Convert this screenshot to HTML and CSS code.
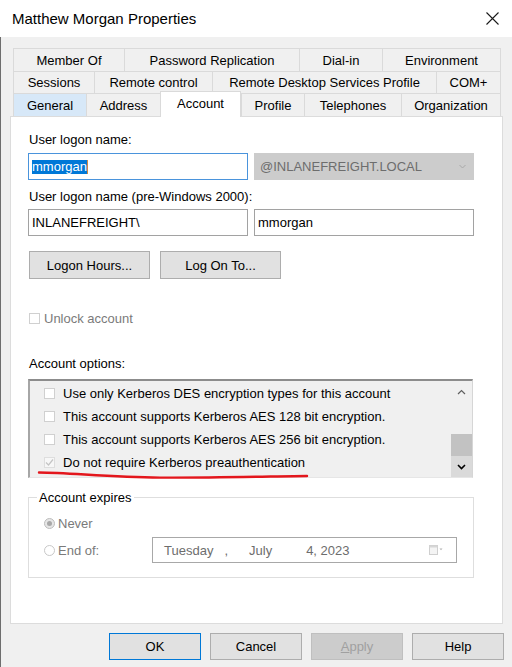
FILE: index.html
```html
<!DOCTYPE html>
<html>
<head>
<meta charset="utf-8">
<link rel="stylesheet" href="styles.css">
</head>
<body>
<div class="window">
  <div class="titlebar">
    <span class="title">Matthew Morgan Properties</span>
    <svg class="close" width="13" height="13" viewBox="0 0 13 13"><path d="M0.5 0.5 L12.5 12.5 M12.5 0.5 L0.5 12.5" stroke="#1a1a1a" stroke-width="1.1" fill="none"/></svg>
  </div>
  <div class="client">
    <div class="tabs">
      <div class="tabrow r1">
        <div class="tab">Member Of</div>
        <div class="tab">Password Replication</div>
        <div class="tab">Dial-in</div>
        <div class="tab">Environment</div>
      </div>
      <div class="tabrow r2">
        <div class="tab">Sessions</div>
        <div class="tab">Remote control</div>
        <div class="tab">Remote Desktop Services Profile</div>
        <div class="tab">COM+</div>
      </div>
      <div class="tabrow r3">
        <div class="tab hover">General</div>
        <div class="tab">Address</div>
        <div class="tab active">Account</div>
        <div class="tab">Profile</div>
        <div class="tab">Telephones</div>
        <div class="tab">Organization</div>
      </div>
    </div>
    <div class="panel">
      <div class="label">User logon name:</div>
      <div class="field-row first">
        <div class="input focus"><span class="sel">mmorgan</span></div>
        <div class="combo"><span>@INLANEFREIGHT.LOCAL</span>
          <svg width="7" height="5" viewBox="0 0 7 5"><path d="M0.5 1 L3.5 4 L6.5 1" stroke="#a8a8a8" fill="none"/></svg>
        </div>
      </div>
      <div class="label second">User logon name (pre-Windows 2000):</div>
      <div class="field-row tight">
        <div class="input">INLANEFREIGHT\</div>
        <div class="input">mmorgan</div>
      </div>
      <div class="btn-row">
        <button class="btn wide">Logon Hours...</button>
        <button class="btn wide">Log On To...</button>
      </div>
      <div class="unlock">
        <span class="cb"></span>
        <span class="disabled-text">Unlock account</span>
      </div>
      <div class="label options">Account options:</div>
      <div class="listbox">
        <div class="items">
          <div class="item"><span class="cb"></span><span>Use only Kerberos DES encryption types for this account</span></div>
          <div class="item"><span class="cb"></span><span>This account supports Kerberos AES 128 bit encryption.</span></div>
          <div class="item"><span class="cb"></span><span>This account supports Kerberos AES 256 bit encryption.</span></div>
          <div class="item"><span class="cb checked"><svg width="9" height="9" viewBox="0 0 9 9"><path d="M1 4.5 L3.5 7 L8 1.5" stroke="#c4c4c4" stroke-width="1.2" fill="none"/></svg></span><span>Do not require Kerberos preauthentication</span></div>
        </div>
        <div class="scrollbar">
          <div class="sb-btn"><svg width="9" height="6" viewBox="0 0 9 6"><path d="M1 5 L4.5 1.5 L8 5" stroke="#606060" stroke-width="1.2" fill="none"/></svg></div>
          <div class="sb-track"></div>
          <div class="sb-thumb"></div>
          <div class="sb-btn down"><svg width="9" height="6" viewBox="0 0 9 6"><path d="M1 1 L4.5 4.5 L8 1" stroke="#000" stroke-width="1.6" fill="none"/></svg></div>
        </div>
      </div>
      <fieldset class="group">
        <legend>Account expires</legend>
        <div class="radio-row">
          <span class="radio on"></span><span class="disabled-text">Never</span>
        </div>
        <div class="radio-row endof">
          <span class="radio"></span><span class="disabled-text eo-label">End of:</span>
          <div class="datepicker">
            <span class="d-day">Tuesday</span>
            <span class="d-comma">,</span>
            <span class="d-month">July</span>
            <span class="d-date">4, 2023</span>
            <svg class="cal" width="14" height="10" viewBox="0 0 14 10"><rect x="0.5" y="0.5" width="8" height="9" fill="#f4f4f4" stroke="#cfcfcf"/><rect x="0.5" y="0.5" width="8" height="2" fill="#d6d6d6"/><path d="M10.5 3.5 L13.5 3.5 L12 5.2 Z" fill="#b0b0b0"/></svg>
          </div>
        </div>
      </fieldset>
    </div>
    <div class="buttons">
      <button class="btn default">OK</button>
      <button class="btn">Cancel</button>
      <button class="btn off"><u>A</u>pply</button>
      <button class="btn">Help</button>
    </div>
  </div>
</div>
<svg class="annot" width="512" height="667" viewBox="0 0 512 667"><path d="M39 472.5 C70 472.8, 110 477.2, 160 477.6 S280 476.2, 307 476" stroke="#e3161c" stroke-width="2.4" fill="none" stroke-linecap="round"/></svg>
</body>
</html>
```
FILE: styles.css
```css
html, body {
  margin: 0;
  padding: 0;
}
body {
  background: #f0f0f0;
  font-family: "Liberation Sans", Arial, sans-serif;
  font-size: 13px;
  color: #000;
  position: relative;
  width: 512px;
  height: 667px;
  overflow: hidden;
}
.window {
  width: 512px;
  height: 667px;
  display: flex;
  flex-direction: column;
}
.titlebar {
  height: 37px;
  flex: none;
  background: #fff;
  display: flex;
  align-items: center;
  justify-content: space-between;
  padding: 0 13px 0 12px;
  box-sizing: border-box;
}
.title {
  font-size: 15px;
  line-height: 18px;
  color: #000;
}
.close {
  display: block;
}
.client {
  flex: 1;
  background: #f0f0f0;
  box-shadow: inset 1px 0 0 #6e6e6e;
  padding: 11px 9px 0 10px;
}
.tabs {
  margin: 0 2px 0 3px;
}
.tabrow {
  display: grid;
}
.r1 {
  grid-template-columns: 111px 175px 83px 119px;
  height: 23px;
}
.r2 {
  grid-template-columns: 81px 118px 224px 65px;
  height: 22px;
}
.r3 {
  grid-template-columns: 73px 74px 81px 63px 97px 100px;
  height: 23px;
}
.tab {
  border-top: 1px solid #dadada;
  border-left: 1px solid #dadada;
  display: flex;
  align-items: center;
  justify-content: center;
  line-height: 15px;
  box-sizing: border-box;
  white-space: nowrap;
}
.tab:last-child {
  border-right: 1px solid #dadada;
}
.tab.hover {
  background: #d7e8f8;
}
.tab.active {
  background: #fff;
  margin-top: -2px;
  margin-bottom: -1px;
  padding-bottom: 3px;
  position: relative;
  z-index: 1;
  border-right: 1px solid #dadada;
}
.panel {
  background: #fff;
  border: 1px solid #dcdcdc;
  height: 508px;
  box-sizing: border-box;
  padding: 15px 0 0 17px;
}
.label {
  line-height: 15px;
  margin-left: 1px;
}
.label.second {
  margin-top: 9px;
}
.label.options {
  margin-top: 30px;
}
.field-row {
  display: flex;
  gap: 6px;
}
.field-row.first {
  margin-top: 6px;
}
.field-row.tight {
  margin-top: 5px;
}
.input {
  width: 220px;
  height: 27px;
  box-sizing: border-box;
  border: 1px solid #a2a2a2;
  padding-left: 3px;
  display: flex;
  align-items: center;
  line-height: 15px;
}
.input.focus {
  border-color: #4a94dc;
}
.sel {
  background: #0078d7;
  color: #fff;
  line-height: 14px;
  border-right: 1px solid #d08a40;
}
.combo {
  width: 220px;
  height: 27px;
  box-sizing: border-box;
  background: #cccccc;
  color: #6d6d6d;
  padding: 0 8px 0 6px;
  display: flex;
  align-items: center;
  justify-content: space-between;
}
.btn-row {
  display: flex;
  gap: 10px;
  margin-top: 15px;
  margin-left: 1px;
}
.btn {
  font-family: inherit;
  font-size: 13px;
  color: #000;
  background: #e1e1e1;
  border: 1px solid #adadad;
  width: 92px;
  height: 27px;
  padding: 0;
  margin: 0;
  box-sizing: border-box;
}
.btn.wide {
  width: 121px;
  height: 28px;
}
.btn.default {
  border-color: #0078d7;
}
.btn.off {
  background: #cccccc;
  border-color: #bfbfbf;
  color: #a0a0a0;
}
.unlock {
  margin-top: 32px;
  margin-left: 1px;
  height: 15px;
  display: flex;
  align-items: center;
  gap: 4px;
}
.disabled-text {
  color: #7a7a7a;
  line-height: 15px;
}
.cb {
  width: 11px;
  height: 11px;
  box-sizing: border-box;
  border: 1px solid #d0d0d0;
  background: #fff;
  display: flex;
  align-items: center;
  justify-content: center;
  flex: none;
}
.cb.checked {
  border-color: #dedede;
  background: #f7f7f7;
}
.listbox {
  margin-top: 8px;
  width: 445px;
  height: 99px;
  box-sizing: border-box;
  border-top: 2px solid #8c8c8c;
  border-left: 2px solid #a6a6a6;
  border-right: 1px solid #d6d6d6;
  border-bottom: 1px solid #e6e6e6;
  background: #f0f0f0;
  display: flex;
}
.items {
  flex: 1;
  padding-top: 1px;
}
.item {
  height: 23px;
  display: flex;
  align-items: center;
  gap: 8px;
  padding-left: 14px;
  white-space: nowrap;
  line-height: 15px;
}
.scrollbar {
  width: 21px;
  display: flex;
  flex-direction: column;
  background: #f0f0f0;
}
.sb-btn {
  height: 21px;
  display: flex;
  align-items: center;
  justify-content: center;
}
.sb-btn.down {
  background: #dadada;
}
.sb-track {
  flex: 1;
}
.sb-thumb {
  height: 22px;
  background: #c2c2c2;
}
.group {
  margin: 12px 0 0 0;
  width: 446px;
  box-sizing: border-box;
  border: 1px solid #dedede;
  padding: 11px 0 14px 8px;
}
.group legend {
  padding: 0 2px;
  line-height: 15px;
}
.radio-row {
  display: flex;
  align-items: center;
  height: 15px;
  margin-left: 7px;
}
.radio-row.endof {
  height: 26px;
  margin-top: 6px;
}
.radio {
  width: 11px;
  height: 11px;
  box-sizing: border-box;
  border-radius: 50%;
  border: 1px solid #c8c8c8;
  background: #fff;
  margin-right: 3px;
  flex: none;
  display: flex;
  align-items: center;
  justify-content: center;
}
.radio.on {
  background: #e6e6e6;
  border-color: #bdbdbd;
}
.radio.on::after {
  content: "";
  width: 5px;
  height: 5px;
  border-radius: 50%;
  background: #a8a8a8;
}
.eo-label {
  width: 94px;
}
.datepicker {
  width: 305px;
  height: 26px;
  box-sizing: border-box;
  border: 1px solid #a8a8a8;
  display: flex;
  align-items: center;
  color: #6d6d6d;
  padding: 0 13px 0 11px;
  white-space: nowrap;
  line-height: 15px;
}
.d-comma {
  margin-left: 11px;
}
.d-month {
  margin-left: 21px;
}
.d-date {
  margin-left: 34px;
}
.cal {
  margin-left: auto;
}
.buttons {
  display: flex;
  justify-content: flex-end;
  gap: 9px;
  margin-top: 9px;
  margin-right: -1px;
}
.annot {
  position: absolute;
  left: 0;
  top: 0;
  pointer-events: none;
}
```
